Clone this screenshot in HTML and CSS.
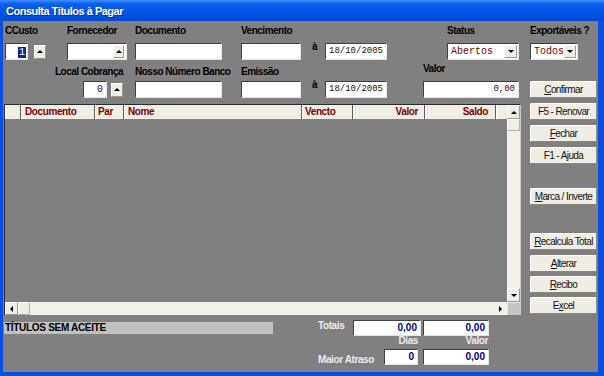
FILE: index.html
```html
<!DOCTYPE html>
<html lang="pt-br">
<head>
    <meta charset="UTF-8">
    <title>Consulta Títulos à Pagar</title>
    <link rel="stylesheet" href="styles.css">
</head>
<body>
    <div class="window">
        <div class="titlebar">Consulta Títulos à Pagar</div>
        <div class="client">
            <div class="main">
                <div class="form">
                    <span class="lbl lbl--top form__c1">CCusto</span>
                    <span class="lbl lbl--top form__c3">Fornecedor</span>
                    <span class="lbl lbl--top form__c5">Documento</span>
                    <span class="lbl lbl--top form__c7">Vencimento</span>
                    <span class="lbl lbl--top form__c13">Status</span>

                    <div class="spin form__c1 form__r2">
                        <div class="field field--ccusto"><span class="field__sel">1</span></div>
                        <div class="arrow-btn arrow-btn--spin"><i class="tri tri--up"></i></div>
                    </div>
                    <div class="field field--fornecedor form__c3 form__r2">
                        <div class="arrow-btn arrow-btn--inner"><i class="tri tri--up"></i></div>
                    </div>
                    <div class="field form__c5 form__r2"></div>
                    <div class="field form__c7 form__r2"></div>
                    <span class="ate form__c9 form__r2">à</span>
                    <div class="field field--mono form__c10 form__r2">18/10/2005</div>
                    <div class="combo form__c13 form__r2">
                        <span class="combo__text">Abertos</span>
                        <div class="arrow-btn arrow-btn--combo"><i class="tri tri--down"></i></div>
                    </div>

                    <span class="lbl lbl--mid form__c2-3">Local Cobrança</span>
                    <span class="lbl lbl--mid form__c5">Nosso Número Banco</span>
                    <span class="lbl lbl--mid form__c7">Emissão</span>
                    <span class="lbl lbl--valor form__c12-13">Valor</span>

                    <div class="spin spin--local form__c2-3 form__r4">
                        <div class="field field--local">0</div>
                        <div class="arrow-btn arrow-btn--spin"><i class="tri tri--up"></i></div>
                    </div>
                    <div class="field form__c5 form__r4"></div>
                    <div class="field form__c7 form__r4"></div>
                    <span class="ate form__c9 form__r4">à</span>
                    <div class="field field--mono form__c10 form__r4">18/10/2005</div>
                    <div class="field field--mono field--right form__c12-13 form__r4">0,00</div>
                </div>

                <div class="table">
                    <div class="table__view">
                        <div class="table__head">
                            <div class="th th--ind"></div>
                            <div class="th th--doc">Documento</div>
                            <div class="th th--par">Par</div>
                            <div class="th th--nome">Nome</div>
                            <div class="th th--vencto">Vencto</div>
                            <div class="th th--valor">Valor</div>
                            <div class="th th--saldo">Saldo</div>
                            <div class="th th--rest"></div>
                        </div>
                        <div class="table__body"></div>
                    </div>
                    <div class="vscroll">
                        <div class="arrow-btn arrow-btn--scroll"><i class="tri tri--up"></i></div>
                        <div class="scroll-thumb scroll-thumb--v"></div>
                        <div class="scroll-track"></div>
                        <div class="arrow-btn arrow-btn--scroll"><i class="tri tri--down"></i></div>
                    </div>
                    <div class="hscroll">
                        <div class="arrow-btn arrow-btn--hscroll"><i class="tri tri--left"></i></div>
                        <div class="scroll-thumb scroll-thumb--h"></div>
                        <div class="scroll-track"></div>
                        <div class="arrow-btn arrow-btn--hright"><i class="tri tri--right"></i></div>
                    </div>
                    <div class="corner"></div>
                </div>

                <div class="footer">
                    <div class="aviso">TÍTULOS SEM ACEITE</div>
                    <div class="totais">
                        <span class="tlbl tlbl--totais">Totais</span>
                        <div class="tfield tfield--wide">0,00</div>
                        <div class="tfield tfield--valor">0,00</div>
                        <span class="tlbl tlbl--dias">Dias</span>
                        <span class="tlbl tlbl--valor">Valor</span>
                        <span class="tlbl tlbl--atraso">Maior Atraso</span>
                        <div class="tfield tfield--dias">0</div>
                        <div class="tfield tfield--valor2">0,00</div>
                    </div>
                </div>
            </div>

            <div class="side">
                <span class="lbl lbl--top">Exportáveis ?</span>
                <div class="combo combo--export">
                    <span class="combo__text">Todos</span>
                    <div class="arrow-btn arrow-btn--combo"><i class="tri tri--down"></i></div>
                </div>
                <button class="btn btn--confirmar"><u>C</u>onfirmar</button>
                <button class="btn">F5 - Renovar</button>
                <button class="btn"><u>F</u>echar</button>
                <button class="btn">F1 - Ajuda</button>
                <button class="btn btn--marca"><u>M</u>arca / Inverte</button>
                <button class="btn btn--recalc"><u>R</u>ecalcula Total</button>
                <button class="btn"><u>A</u>lterar</button>
                <button class="btn btn--tight"><u>R</u>ecibo</button>
                <button class="btn btn--tight">E<u>x</u>cel</button>
            </div>
        </div>
    </div>
</body>
</html>
```

FILE: styles.css
```css
:root {
    --bg: #808080;
    --cream: #efede4;
    --maroon: #800000;
    --navy: #000080;
    --xp-blue: #0a50e0;
}

* {
    margin: 0;
    padding: 0;
    box-sizing: border-box;
}

body {
    width: 604px;
    height: 376px;
    overflow: hidden;
    font-family: "Liberation Sans", Arial, sans-serif;
    font-size: 10px;
}

.window {
    width: 604px;
    height: 376px;
    display: flex;
    flex-direction: column;
    background: var(--xp-blue);
}

.titlebar {
    height: 21px;
    padding-left: 6px;
    color: #fff;
    font-size: 11px;
    font-weight: bold;
    letter-spacing: -0.5px;
    line-height: 22px;
    background: linear-gradient(#3d8dff, #0b5eea 4px, #0055e5 60%, #0049d2);
    text-shadow: 1px 1px 0 #0c2d8f;
}

.client {
    flex: 1;
    margin: 0 6px 4px 3px;
    padding: 4px 0 0 1px;
    display: grid;
    grid-template-columns: 517px 67px;
    column-gap: 9px;
    background: var(--bg);
}

/* formulario */

.form {
    display: grid;
    grid-template-columns: 50px 12px 58px 10px 87px 19px 60px 10px 14px 62px 36px 24px 72px;
    grid-template-rows: 18px 17px 21px 17px;
    padding-left: 1px;
}

.form__c1 { grid-column: 1; }
.form__c3 { grid-column: 3; }
.form__c5 { grid-column: 5; }
.form__c7 { grid-column: 7 / span 2; }
.form__c9 { grid-column: 9; }
.form__c10 { grid-column: 10; }
.form__c13 { grid-column: 13; }
.form__c2-3 { grid-column: 2 / span 2; }
.form__c12-13 { grid-column: 12 / span 2; }
.form__r2 { grid-row: 2; }
.form__r4 { grid-row: 4; }

.lbl {
    font-weight: bold;
    letter-spacing: -0.5px;
    line-height: 12px;
    white-space: nowrap;
    color: #000;
}

.lbl--top { grid-row: 1; }
.lbl--mid { grid-row: 3; margin-top: 6px; }
.lbl--valor { grid-row: 3; margin-top: 3px; }

.field {
    height: 17px;
    padding: 0 3px;
    background: #fff;
    border: 1px solid;
    border-color: #404040 #e6e6e6 #e6e6e6 #404040;
    line-height: 15px;
    color: #111;
}

.form__c7.field { grid-column: 7; }

.field--mono {
    font-family: "Liberation Mono", "Courier New", monospace;
    font-size: 9px;
}

.field--right { text-align: right; }

.spin {
    display: flex;
    align-items: center;
    gap: 6px;
}

.spin--local {
    justify-content: flex-end;
    gap: 4px;
    padding-right: 2px;
}

.field--ccusto {
    width: 23px;
    text-align: right;
    padding-right: 1px;
}

.field__sel {
    padding: 0 1px;
    background: #0a2c8c;
    color: #fff;
    font-family: "Liberation Mono", monospace;
    font-size: 10px;
}

.field--local {
    width: 24px;
    text-align: right;
    font-family: "Liberation Mono", monospace;
}

.field--fornecedor {
    display: flex;
    align-items: center;
    justify-content: flex-end;
    padding-right: 2px;
    width: 60px;
}

.ate {
    font-weight: bold;
    line-height: 8px;
    padding-left: 1px;
}

.combo {
    display: flex;
    align-items: center;
    height: 17px;
    padding: 0 1px 0 3px;
    background: #fff;
    border: 1px solid;
    border-color: #404040 #e6e6e6 #e6e6e6 #404040;
}

.combo__text {
    flex: 1;
    color: var(--maroon);
    font-family: "Liberation Mono", "Courier New", monospace;
    font-size: 10px;
}

.combo--export {
    width: 48px;
}

/* botoes de seta */

.arrow-btn {
    display: flex;
    align-items: center;
    justify-content: center;
    background: var(--cream);
    border: 1px solid;
    border-color: #fff #9c998c #9c998c #fff;
}

.arrow-btn--spin {
    width: 12px;
    height: 14px;
}

.arrow-btn--inner {
    width: 11px;
    height: 13px;
}

.arrow-btn--combo {
    width: 13px;
    height: 13px;
}

.arrow-btn--scroll {
    height: 14px;
}

.arrow-btn--hscroll {
    width: 13px;
}

.arrow-btn--hright {
    width: 13px;
    border-color: transparent;
    background: transparent;
}

.tri {
    width: 0;
    height: 0;
}

.tri--up {
    border-left: 3px solid transparent;
    border-right: 3px solid transparent;
    border-bottom: 3px solid #000;
}

.tri--down {
    border-left: 3px solid transparent;
    border-right: 3px solid transparent;
    border-top: 3px solid #000;
}

.tri--left {
    border-top: 3px solid transparent;
    border-bottom: 3px solid transparent;
    border-right: 3px solid #000;
}

.tri--right {
    border-top: 3px solid transparent;
    border-bottom: 3px solid transparent;
    border-left: 3px solid #000;
}

/* grade */

.table {
    margin-top: 6px;
    height: 211px;
    display: grid;
    grid-template-columns: 1fr 13px;
    grid-template-rows: 1fr 13px;
    border-top: 1px solid #2a2a2a;
    border-left: 1px solid #2a2a2a;
    border-right: 1px solid #c8c8c8;
}

.table__view {
    display: flex;
    flex-direction: column;
}

.table__head {
    display: flex;
    height: 14px;
    background: #efede4;
}

.th {
    flex: none;
    padding: 0 4px;
    border-right: 1px solid #5a5a5a;
    box-shadow: inset 1px 0 #fff;
    color: var(--maroon);
    font-weight: bold;
    letter-spacing: -0.4px;
    line-height: 14px;
    white-space: nowrap;
}

.th--ind { width: 16px; }
.th--doc { width: 74px; }
.th--par { width: 29px; padding-left: 3px; }
.th--nome { width: 178px; }
.th--vencto { width: 51px; padding-left: 3px; }
.th--valor { width: 72px; text-align: right; padding-right: 6px; }
.th--saldo { width: 71px; text-align: right; padding-right: 7px; }
.th--rest { flex: 1; border-right: 0; }

.table__body {
    flex: 1;
    background: var(--bg);
}

.vscroll {
    display: flex;
    flex-direction: column;
    background: #f3f1e8;
}

.scroll-track {
    flex: 1;
    background: #f3f1e8;
}

.scroll-thumb {
    background: var(--cream);
    border: 1px solid;
    border-color: #fff #b4b1a4 #b4b1a4 #fff;
}

.scroll-thumb--v { height: 12px; }
.scroll-thumb--h { width: 12px; }

.hscroll {
    display: flex;
    background: #f3f1e8;
}

.corner {
    background: #c4c4c4;
    border-top: 1px solid #e8e8e8;
    border-left: 1px solid #e8e8e8;
}

/* rodape */

.footer {
    display: flex;
    align-items: flex-start;
    margin-top: 5px;
}

.aviso {
    width: 269px;
    height: 12px;
    margin-top: 2px;
    padding-left: 1px;
    background: #c0c0c0;
    font-weight: bold;
    letter-spacing: -0.3px;
    line-height: 12px;
}

.totais {
    display: grid;
    grid-template-columns: 35px 30px 38px 2px 66px;
    grid-template-rows: 16px 13px 17px;
    margin-left: 45px;
}

.tlbl {
    color: #ececec;
    font-weight: bold;
    letter-spacing: -0.4px;
    white-space: nowrap;
}

.tlbl--totais { grid-column: 1; grid-row: 1; line-height: 11px; }
.tlbl--dias { grid-column: 3; grid-row: 2; text-align: right; padding-right: 3px; line-height: 10px; }
.tlbl--valor { grid-column: 5; grid-row: 2; text-align: right; padding-right: 1px; line-height: 10px; }
.tlbl--atraso { grid-column: 1 / span 2; grid-row: 3; align-self: end; line-height: 12px; }

.tfield {
    height: 16px;
    padding: 0 3px;
    background: #fff;
    border: 1px solid;
    border-color: #404040 #e6e6e6 #e6e6e6 #404040;
    color: var(--navy);
    font-weight: bold;
    line-height: 14px;
    text-align: right;
}

.tfield--wide { grid-column: 2 / span 2; grid-row: 1; }
.tfield--valor { grid-column: 5; grid-row: 1; }
.tfield--dias { grid-column: 3; grid-row: 3; width: 34px; margin-left: 1px; }
.tfield--valor2 { grid-column: 5; grid-row: 3; }

/* coluna de botoes */

.side {
    display: flex;
    flex-direction: column;
}

.side .lbl--top {
    height: 18px;
}

.btn {
    height: 17px;
    margin-top: 5px;
    background: var(--cream);
    border: 1px solid;
    border-color: #fff #8a877a #8a877a #fff;
    border-radius: 2px;
    color: #111;
    font-family: "Liberation Sans", Arial, sans-serif;
    font-size: 10px;
    letter-spacing: -0.6px;
    line-height: 15px;
    text-align: center;
    white-space: nowrap;
}

.btn--confirmar { margin-top: 21px; }
.btn--marca { margin-top: 24px; }
.btn--recalc { margin-top: 28px; }
.btn--tight { margin-top: 4px; }
```
